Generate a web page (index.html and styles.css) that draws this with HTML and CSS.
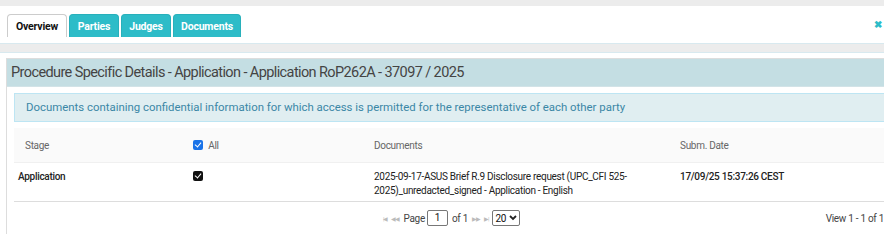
FILE: index.html
```html
<!DOCTYPE html>
<html lang="en">
  <head>
    <meta charset="UTF-8" />
    <title>Procedure Specific Details</title>
    <link rel="stylesheet" href="styles.css">
  </head>
  <body>
    <div class="topbar"></div>
    <div class="tabbar">
      <ul class="tabs">
        <li class="tab active">Overview</li>
        <li class="tab">Parties</li>
        <li class="tab">Judges</li>
        <li class="tab">Documents</li>
      </ul>
      <span class="close">&#10006;</span>
    </div>
    <div class="band"></div>
    <div class="panel">
      <div class="panel-head">Procedure Specific Details - Application - Application RoP262A - 37097 / 2025</div>
      <div class="panel-body">
        <div class="info">Documents containing confidential information for which access is permitted for the representative of each other party</div>
        <table class="grid">
          <thead>
            <tr>
              <th class="c-stage">Stage</th>
              <th class="c-check"><span class="cb on"></span> All</th>
              <th class="c-docs">Documents</th>
              <th class="c-date">Subm. Date</th>
            </tr>
          </thead>
          <tbody>
            <tr>
              <td class="c-stage strong">Application</td>
              <td class="c-check"><span class="cb dark"></span></td>
              <td class="c-docs">2025-09-17-ASUS Brief R.9 Disclosure request (UPC_CFI 525-2025)_unredacted_signed - Application - English</td>
              <td class="c-date strong">17/09/25 15:37:26 CEST</td>
            </tr>
          </tbody>
        </table>
        <div class="pager">
          <div class="pager-mid">
            <span class="nav">|&#9664;</span>
            <span class="nav">&#9664;&#9664;</span>
            <span>Page</span>
            <span class="page-box">1</span>
            <span>of 1</span>
            <span class="nav">&#9654;&#9654;</span>
            <span class="nav">&#9654;|</span>
            <span class="size-box">20 <svg width="8" height="6" viewBox="0 0 8 6"><path d="M1 1 L4 4 L7 1" fill="none" stroke="#222" stroke-width="1.8"/></svg></span>
          </div>
          <div class="pager-right">View 1 - 1 of 1</div>
        </div>
      </div>
    </div>
  </body>
</html>
```

FILE: styles.css
```css
body {
  margin: 0;
  font-family: Roboto, "Liberation Sans", sans-serif;
  background: #fff;
  color: #333;
  overflow: hidden;
}
.topbar {
  height: 6px;
  background: #ececec;
}
.tabbar {
  height: 37px;
  display: flex;
  align-items: flex-end;
  justify-content: space-between;
  border-bottom: 1px solid #d8e9ef;
}
.tabs {
  list-style: none;
  margin: 0 0 6px 7px;
  padding: 0;
  display: flex;
  gap: 2px;
}
.tab {
  height: 23px;
  line-height: 23px;
  padding: 0 4px;
  font-size: 10.5px;
  font-weight: 700;
  letter-spacing: -0.2px;
  color: #fff;
  background: #2dbcc8;
  border: 1px solid #28b0bb;
  border-bottom: none;
  border-radius: 4px 4px 0 0;
  box-sizing: border-box;
  text-align: center;
}
.tab:nth-child(2) { width: 50px; }
.tab:nth-child(3) { width: 50px; }
.tab:nth-child(4) { width: 68px; }
.tab.active {
  width: 60px;
  color: #111;
  background: #fff;
  border-color: #ccc;
}
.close {
  align-self: center;
  margin-right: 2px;
  color: #2dbcc8;
  font-size: 10px;
  font-weight: 700;
}
.band {
  height: 8px;
  background: #ececec;
  border-bottom: 1px solid #d8e9ef;
}
.panel {
  margin: 5px 0 0 6px;
  border-left: 1px solid #ddd;
  border-top: 1px solid #ddd;
}
.panel-head {
  height: 27px;
  line-height: 27px;
  padding-left: 4px;
  background: #c4dee3;
  color: #444;
  font-size: 14.5px;
  letter-spacing: -0.6px;
  border-bottom: 1px solid #d2e3e7;
}
.panel-body {
  padding: 6px 0 0 7px;
}
.info {
  height: 27px;
  line-height: 27px;
  padding-left: 11px;
  background: #e0eef1;
  border: 1px solid #bde5f3;
  border-right: none;
  color: #3b87a6;
  font-size: 11.4px;
}
.grid {
  width: 100%;
  margin-top: 6px;
  border-collapse: collapse;
  table-layout: fixed;
  font-size: 10px;
  letter-spacing: -0.3px;
}
.grid th {
  height: 34px;
  padding: 0;
  font-weight: 400;
  color: #666;
  text-align: left;
  background: #fafafa;
  border-bottom: 1px solid #f0f0f0;
}
.grid td {
  height: 39px;
  vertical-align: top;
  padding: 7px 0 0 0;
  color: #222;
  line-height: 14px;
  border-bottom: 1px solid #ddd;
  box-sizing: border-box;
}
.grid th.c-stage { width: 168px; padding-left: 11px; }
.grid td.c-stage { padding-left: 4px; }
.strong { font-weight: 500; }
.grid .c-check { width: 181px; }
.grid .c-docs { width: 306px; }
.grid td.c-docs { padding-right: 40px; }
.cb {
  display: inline-block;
  width: 10px;
  height: 10px;
  border-radius: 2px;
  vertical-align: -1px;
  margin-right: 3px;
  position: relative;
}
.cb.on { background: #1a73e8; }
.cb.dark { background: #111; }
.cb::after {
  content: "";
  position: absolute;
  left: 3px;
  top: 1px;
  width: 3px;
  height: 5px;
  border: solid #fff;
  border-width: 0 1.5px 1.5px 0;
  transform: rotate(40deg);
}
.grid td .cb { margin-top: 1px; }
.pager {
  display: flex;
  align-items: center;
  height: 32px;
  font-size: 10px;
  color: #444;
  letter-spacing: -0.3px;
}
.pager-mid {
  display: flex;
  align-items: center;
  gap: 4px;
  margin-left: 369px;
}
.nav {
  color: #bbb;
  font-size: 6px;
  letter-spacing: -1px;
}
.page-box {
  display: inline-block;
  width: 19px;
  height: 14px;
  line-height: 14px;
  text-align: center;
  border: 1px solid #777;
  border-radius: 2px;
  color: #111;
  margin-left: -2px;
}
.size-box {
  display: inline-flex;
  align-items: center;
  gap: 3px;
  height: 14px;
  padding: 0 2px;
  border: 1px solid #777;
  border-radius: 2px;
  color: #111;
}
.pager-right {
  margin-left: auto;
  white-space: nowrap;
}
```
